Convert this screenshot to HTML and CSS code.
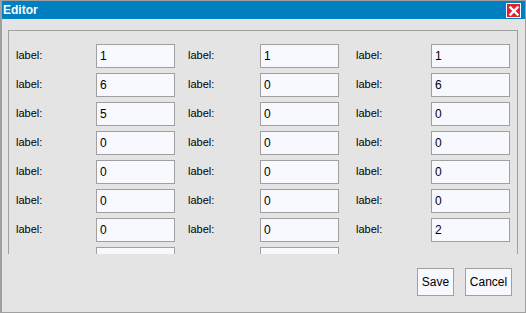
FILE: index.html
```html
<!DOCTYPE html>
<html>
<head>
<meta charset="utf-8">
<link rel="stylesheet" href="styles.css">
</head>
<body>
<div class="window">
  <div class="titlebar">
    <span class="title">Editor</span>
    <span class="close"><svg width="12" height="12" viewBox="0 0 12 12"><path d="M2.5 2.5 L9.5 9.5 M9.5 2.5 L2.5 9.5" stroke="#fff" stroke-width="2.4" stroke-linecap="square"/></svg></span>
  </div>
  <div class="content">
    <div class="panel">
      <div class="grid">
        <span class="lbl c1">label:</span><span class="inp">1</span><span class="lbl c2">label:</span><span class="inp">1</span><span class="lbl c3">label:</span><span class="inp">1</span>
        <span class="lbl c1">label:</span><span class="inp">6</span><span class="lbl c2">label:</span><span class="inp">0</span><span class="lbl c3">label:</span><span class="inp">6</span>
        <span class="lbl c1">label:</span><span class="inp">5</span><span class="lbl c2">label:</span><span class="inp">0</span><span class="lbl c3">label:</span><span class="inp">0</span>
        <span class="lbl c1">label:</span><span class="inp">0</span><span class="lbl c2">label:</span><span class="inp">0</span><span class="lbl c3">label:</span><span class="inp">0</span>
        <span class="lbl c1">label:</span><span class="inp">0</span><span class="lbl c2">label:</span><span class="inp">0</span><span class="lbl c3">label:</span><span class="inp">0</span>
        <span class="lbl c1">label:</span><span class="inp">0</span><span class="lbl c2">label:</span><span class="inp">0</span><span class="lbl c3">label:</span><span class="inp">0</span>
        <span class="lbl c1">label:</span><span class="inp">0</span><span class="lbl c2">label:</span><span class="inp">0</span><span class="lbl c3">label:</span><span class="inp">2</span>
        <span class="lbl c1"></span><span class="inp"></span><span class="lbl c2"></span><span class="inp"></span><span class="lbl c3"></span><span></span>
      </div>
    </div>
    <div class="buttons">
      <span class="btn save">Save</span>
      <span class="btn cancel">Cancel</span>
    </div>
  </div>
</div>
</body>
</html>
```

FILE: styles.css
```css
html, body {
  margin: 0;
  padding: 0;
}
body {
  width: 526px;
  height: 313px;
  overflow: hidden;
  font-family: "Liberation Sans", Arial, sans-serif;
  background: #e4e4e4;
}
.window {
  box-sizing: border-box;
  width: 526px;
  height: 313px;
  border: 1px solid #a0a0a0;
  border-left-width: 2px;
  background: #e4e4e4;
  display: flex;
  flex-direction: column;
}
.titlebar {
  height: 18px;
  background: #0080c0;
  display: flex;
  align-items: center;
  justify-content: space-between;
  padding: 0 4px 0 1px;
}
.title {
  color: #fff;
  font-weight: bold;
  font-size: 12px;
  line-height: 18px;
}
.close {
  box-sizing: border-box;
  width: 15px;
  height: 15px;
  border: 1px solid #fff;
  background: #e2202e;
  display: flex;
  align-items: center;
  justify-content: center;
  margin-top: 1px;
}
.close svg {
  display: block;
}
.content {
  flex: 1;
  display: flex;
  flex-direction: column;
  padding: 11px 8px 0 6px;
}
.panel {
  box-sizing: border-box;
  width: 510px;
  height: 224px;
  border: 1px solid #a0a0a0;
  border-bottom: none;
  overflow: hidden;
}
.grid {
  display: grid;
  grid-template-columns: 80px 79px 85px 79px 92px 79px;
  grid-auto-rows: 24px;
  row-gap: 5px;
  padding: 13px 0 0 7px;
}
.lbl {
  font-size: 11px;
  color: #000;
  line-height: 22px;
}
.c2 { padding-left: 13px; }
.c3 { padding-left: 17px; }
.inp {
  box-sizing: border-box;
  height: 24px;
  border: 1px solid #a0a0a0;
  background: #f8f8ff;
  font-size: 12px;
  line-height: 22px;
  padding-left: 3px;
  color: #000;
}
.buttons {
  display: flex;
  justify-content: flex-end;
  gap: 11px;
  margin-top: 14px;
  padding-right: 5px;
}
.btn {
  box-sizing: border-box;
  height: 28px;
  border: 1px solid #a0a0a0;
  background: #f8f8ff;
  font-size: 12px;
  line-height: 26px;
  text-align: center;
  color: #000;
}
.save { width: 37px; }
.cancel { width: 47px; }
```
